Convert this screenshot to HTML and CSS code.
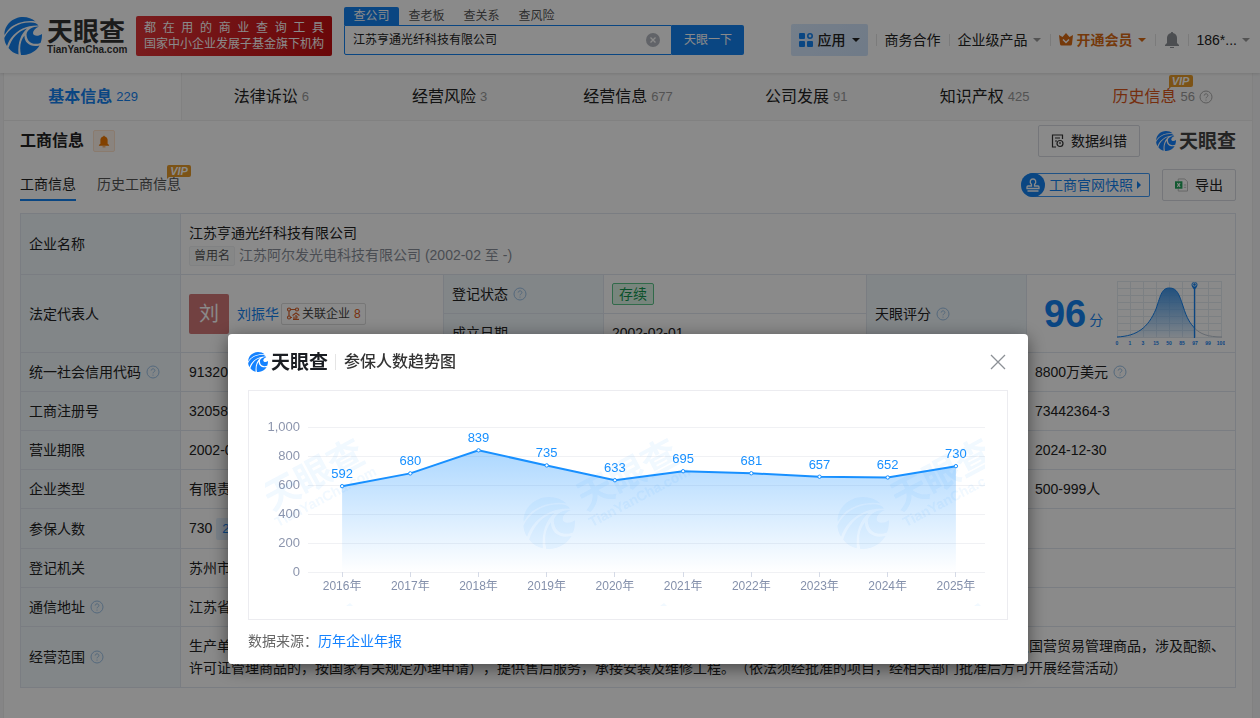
FILE: index.html
```html
<!DOCTYPE html>
<html lang="zh-CN">
<head>
  <meta charset="UTF-8">
  <meta name="viewport" content="width=device-width, initial-scale=1.0">
  <title>江苏亨通光纤科技有限公司 - 天眼查</title>
  <link rel="stylesheet" href="styles.css">
</head>
<body>
  <!-- 公用图标 -->
  <svg class="sprite" width="0" height="0" aria-hidden="true">
    <symbol id="i-logo" viewBox="0 0 38 38">
      <path fill="currentColor" d="M19 0c5 0 9 1.500 12.500 4.500C22 3 11 6 5 12c-2 2-3 4-4.500 6C0 8 9 0 19 0z"/>
      <path fill="currentColor" d="M.3 21C5 11 15 5 27 5.500c4 0 6 1 7.500 3C24 8 14 12 7 21c-2 3-3 5-4 8C1.500 27 .5 24 .3 21z"/>
      <path fill="currentColor" d="M4.500 31C8 21 14 14 23 11.500 17 17 13.500 25 14.500 37.500 10.500 36.500 7 34.500 4.500 31z"/>
      <path fill="currentColor" d="M17 38c-2-9 0-15 3.500-19.500C20 25 26 31 35.500 28.500 32 34.500 25 38.500 17 38z"/>
      <path fill="currentColor" d="M22.500 17.500C23 13 28 9.500 35 9.500c-3.500 1.500-6 4-6 6.500 0 3 5 4 9 1 0 3-.2 6-1.500 9-7.500 2.500-13.500-.5-14-8.500z"/>
    </symbol>
    <symbol id="i-help" viewBox="0 0 14 14">
      <circle cx="7" cy="7" r="6" fill="none" stroke="currentColor"/>
      <path d="M5.2 5.6c0-2.4 3.7-2.3 3.7-.1C8.900 6.900 7 6.900 7 8.300M7 9.600v1" fill="none" stroke="currentColor"/>
    </symbol>
    <symbol id="i-caret" viewBox="0 0 10 6">
      <path d="M1 1h8L5 5z" fill="currentColor"/>
    </symbol>
    <symbol id="i-bell" viewBox="0 0 16 18">
      <path d="M8 1c1 0 1 .6 1 1 3 .6 4 3 4 5v5l2 2v1H1v-1l2-2V7c0-2 1-4.400 4-5 0-.4 0-1 1-1zM6 16h4v1H6z" fill="currentColor"/>
    </symbol>
  </svg>

  <header class="header">
    <a class="brand" href="#">
      <svg class="brand-icon"><use href="#i-logo"/></svg>
      <span class="brand-text"><b>天眼查</b><small>TianYanCha.com</small></span>
    </a>
    <div class="slogan">
      <div class="slogan-top">都 在 用 的 商 业 查 询 工 具</div>
      <div>国家中小企业发展子基金旗下机构</div>
    </div>
    <form class="search">
      <div class="search-tabs">
        <a class="on" href="#">查公司</a><a href="#">查老板</a><a href="#">查关系</a><a href="#">查风险</a>
      </div>
      <div class="search-box">
        <input type="text" value="江苏亨通光纤科技有限公司" aria-label="搜索">
        <button class="clear" type="button" aria-label="清空">
          <svg viewBox="0 0 14 14"><circle cx="7" cy="7" r="7" fill="#b4b8c0"/><path d="M4.500 4.500l5 5m0-5l-5 5" stroke="#fff" stroke-width="1.300"/></svg>
        </button>
        <button class="go" type="button">天眼一下</button>
      </div>
    </form>
    <nav class="nav">
      <button class="apps" type="button">
        <svg class="apps-icon" viewBox="0 0 14 14" fill="#1482f0"><rect width="6" height="6" rx="1"/><rect y="8" width="6" height="6" rx="1"/><rect x="8" y="8" width="6" height="6" rx="1"/><circle cx="11" cy="3" r="2.200" fill="none" stroke="#1482f0" stroke-width="1.600"/></svg>
        应用
        <svg class="caret"><use href="#i-caret"/></svg>
      </button>
      <a href="#">商务合作</a>
      <a href="#">企业级产品<svg class="caret grey"><use href="#i-caret"/></svg></a>
      <a class="vip-link" href="#">
        <svg class="crown" viewBox="0 0 14 13"><path d="M0 2l3.500 2L7 0l3.500 4L14 2l-1 9q-.2 1.500-1.500 1.500h-9Q1.200 12.500 1 11z" fill="#d96a14"/><path d="M4 6.500l3 3 3-3" fill="none" stroke="#fff" stroke-width="1.500"/></svg>开通会员<svg class="caret"><use href="#i-caret"/></svg>
      </a>
      <a href="#" aria-label="消息"><svg class="bell"><use href="#i-bell"/></svg></a>
      <a href="#">186*...<svg class="caret grey"><use href="#i-caret"/></svg></a>
    </nav>
  </header>

  <main class="container">
    <nav class="tabs">
      <a class="on" href="#">基本信息<em>229</em></a>
      <a href="#">法律诉讼<em>6</em></a>
      <a href="#">经营风险<em>3</em></a>
      <a href="#">经营信息<em>677</em></a>
      <a href="#">公司发展<em>91</em></a>
      <a href="#">知识产权<em>425</em></a>
      <a class="history" href="#"><span class="with-vip">历史信息<i class="vip">VIP</i></span><em>56</em><svg class="help"><use href="#i-help"/></svg></a>
    </nav>

    <section class="section">
      <div class="title-row">
        <h2>工商信息</h2>
        <button class="remind" type="button" aria-label="提醒"><svg><use href="#i-bell"/></svg></button>
        <div class="right">
          <button class="btn btn-fix" type="button">
            <svg viewBox="0 0 13 14" fill="none" stroke="#333" stroke-width="1.200"><path d="M11.500 5V1H1.500v12h3.500M4 4h5M4 7h2"/><circle cx="9" cy="9.500" r="3"/><path d="M9 8v2"/></svg>
            数据纠错
          </button>
          <span class="mini-logo grey-logo"><svg><use href="#i-logo"/></svg><b>天眼查</b></span>
        </div>
      </div>
      <div class="sub-row">
        <a class="sub on" href="#">工商信息</a>
        <a class="sub" href="#"><span class="with-vip">历史工商信息<i class="vip">VIP</i></span></a>
        <div class="right">
          <button class="snapshot" type="button">
            <span class="stamp"><svg viewBox="0 0 14 14" fill="none" stroke="#fff" stroke-width="1.300"><path d="M5.500 8V6.500C3 4 4.500 1 7 1s4 3 1.500 5.500V8H12q1 0 1 1v1.500H1V9q0-1 1-1zM1.500 13h11"/></svg></span>
            工商官网快照
            <svg class="arrow" viewBox="0 0 4 8"><path d="M0 0l4 4-4 4z" fill="currentColor"/></svg>
          </button>
          <button class="btn btn-export" type="button">
            <svg viewBox="0 0 14 14"><path d="M3.500 3V.5h7l3 3v10h-10V11" fill="none" stroke="#bbb"/><path d="M9.500 7H12M9.500 9.500H12" stroke="#bbb"/><path d="M0 3h8v8H0z" fill="#22a55b"/><path d="M2.500 5l3 4m0-4l-3 4" stroke="#fff" stroke-width="1.200"/></svg>
            导出
          </button>
        </div>
      </div>

      <table class="info">
        <colgroup><col class="c-label"><col><col class="c-label"><col><col class="c-label"><col class="c-last"></colgroup>
        <tr>
          <th>企业名称</th>
          <td colspan="5"><div>江苏亨通光纤科技有限公司</div><div class="former"><span class="former-tag">曾用名</span>江苏阿尔发光电科技有限公司 (2002-02 至 -)</div></td>
        </tr>
        <tr>
          <th rowspan="2">法定代表人</th>
          <td rowspan="2">
            <div class="person">
              <span class="avatar">刘</span>
              <a class="name" href="#">刘振华</a>
              <a class="relate" href="#"><svg viewBox="0 0 13 13" fill="none" stroke="#d9622b" stroke-width="1.200"><circle cx="2.500" cy="2.500" r="1.500"/><circle cx="10.500" cy="2.500" r="1.500"/><circle cx="2.500" cy="10.500" r="1.500"/><path d="M4 2.500h5M2.500 4v5M4 10.500h1.500M6 8.500L9.500 6 13 8.500M9.500 8v4M7.500 9.500v2.500M6.500 12.300h6M9.500 10h2"/></svg>关联企业<em>8</em></a>
            </div>
          </td>
          <th>登记状态<svg class="help"><use href="#i-help"/></svg></th>
          <td class="status-cell"><span class="status">存续</span></td>
          <th rowspan="2">天眼评分<svg class="help"><use href="#i-help"/></svg></th>
          <td rowspan="2" class="score-cell">
            <div class="score">
              <b>96</b><span>分</span>
              <svg class="curve" viewBox="0 0 112 68">
                <defs><linearGradient id="bell-fill" x1="0" y1="0" x2="0" y2="1"><stop offset="0" stop-color="#3f95e8"/><stop offset="1" stop-color="#3f95e8" stop-opacity=".1"/></linearGradient></defs>
                <path d="M4.500 1.500v56M17.500 1.500v56M30.500 1.500v56M43.500 1.500v56M56.500 1.500v56M69.500 1.500v56M82.500 1.500v56M95.500 1.500v56M108.500 1.500v56M4 1.500h105M4 8.500h105M4 15.500h105M4 22.500h105M4 29.500h105M4 36.500h105M4 43.500h105M4 50.500h105M4 57.500h105" stroke="#e6ecf2" fill="none"/>
                <path d="M4 57C24 56 35 48 43 29 48 14 49 8 56.500 8S66 14 70 26C74 39 77 43 81.500 48V57.500H4z" fill="url(#bell-fill)"/>
                <path d="M81.500 48C87 54 95 57 109 57" stroke="#bcc6d2" fill="none"/>
                <path d="M4 57C24 56 35 48 43 29 48 14 49 8 56.500 8S66 14 70 26C74 39 77 43 81.500 48" stroke="#1482f0" fill="none"/>
                <path d="M81.500 5v53" stroke="#1482f0" stroke-width="1.300"/>
                <path d="M78.500 5a3 3 0 1 1 6 0q0 2-3 5-3-3-3-5z" fill="#1482f0"/><circle cx="81.500" cy="4.500" r="1.700" fill="#1482f0" stroke="#fff" stroke-width=".8"/>
                <g class="curve-axis"><text x="4" y="65">0</text><text x="17" y="65">1</text><text x="30" y="65">3</text><text x="43" y="65">15</text><text x="56" y="65">50</text><text x="69" y="65">85</text><text x="82" y="65">97</text><text x="95" y="65">99</text><text x="108" y="65">100</text></g>
              </svg>
            </div>
          </td>
        </tr>
        <tr>
          <th>成立日期</th>
          <td>2002-02-01</td>
        </tr>
        <tr>
          <th>统一社会信用代码<svg class="help"><use href="#i-help"/></svg></th>
          <td>91320</td>
          <th></th><td></td>
          <th></th>
          <td>8800万美元<svg class="help"><use href="#i-help"/></svg></td>
        </tr>
        <tr><th>工商注册号</th><td>32058</td><th></th><td></td><th></th><td>73442364-3</td></tr>
        <tr><th>营业期限</th><td>2002-0</td><th></th><td></td><th></th><td>2024-12-30</td></tr>
        <tr><th>企业类型</th><td>有限责</td><th></th><td></td><th></th><td>500-999人</td></tr>
        <tr class="insured"><th>参保人数</th><td colspan="5">730<span class="year-tag">2025</span></td></tr>
        <tr><th>登记机关</th><td colspan="5">苏州市</td></tr>
        <tr><th>通信地址<svg class="help"><use href="#i-help"/></svg></th><td colspan="5">江苏省</td></tr>
        <tr>
          <th>经营范围<svg class="help"><use href="#i-help"/></svg></th>
          <td colspan="5">生产单模光纤、多模光纤及特种光纤，销售本公司自产产品；从事光纤、光缆及相关产品的批发、进出口业务以及相关技术服务（不涉及国营贸易管理商品，涉及配额、许可证管理商品的，按国家有关规定办理申请），提供售后服务，承接安装及维修工程。（依法须经批准的项目，经相关部门批准后方可开展经营活动）</td>
        </tr>
      </table>
    </section>
  </main>

  <!-- 弹窗 -->
  <div class="mask">
    <div class="modal" role="dialog" aria-modal="true" aria-labelledby="modal-title">
      <div class="modal-head">
        <span class="mini-logo"><svg><use href="#i-logo"/></svg><b>天眼查</b></span>
        <h3 id="modal-title">参保人数趋势图</h3>
        <button class="close" type="button" aria-label="关闭"><svg viewBox="0 0 16 16"><path d="M1 1l14 14M15 1L1 15" stroke="#8c9096" stroke-width="1.300"/></svg></button>
      </div>
      <div class="chart-box">
        <svg class="chart" id="chart" viewBox="0 0 758 228">
          <defs>
            <linearGradient id="area-fill" x1="0" y1="0" x2="0" y2="1"><stop offset="0" stop-color="#1890ff" stop-opacity=".36"/><stop offset="1" stop-color="#1890ff" stop-opacity="0"/></linearGradient>
            <clipPath id="canvas"><rect x="16" y="8" width="720" height="207"/></clipPath>
            <g id="mark">
              <svg x="-26" y="-26" width="52" height="52"><use href="#i-logo"/></svg>
              <g transform="rotate(-28)"><text class="mark-cn" x="38" y="7">天眼查</text><text class="mark-en" x="36" y="24">TianYanCha.com</text></g>
            </g>
          </defs>
          <g id="plot"></g>
          <g class="marks" clip-path="url(#canvas)">
            <use href="#mark" x="-14" y="132"/><use href="#mark" x="300" y="132"/><use href="#mark" x="614" y="132"/>
            <path d="M97 215l4-3 3 3zM411 215l4-3 3 3zM725 215l4-3 3 3z"/>
          </g>
        </svg>
      </div>
      <p class="source">数据来源：<a href="#">历年企业年报</a></p>
    </div>
  </div>

  <script>
    var data = [
      [2016, 592], [2017, 680], [2018, 839], [2019, 735], [2020, 633],
      [2021, 695], [2022, 681], [2023, 657], [2024, 652], [2025, 730]
    ]
    var left = 59, right = 736, bottom = 181, height = 145, step = 68.2
    var html = ''
    var points = data.map(function (d, i) {
      return [left + step * (i + 0.5), bottom - d[1] / 1000 * height]
    })
    // 刻度线
    for (var v = 0; v <= 1000; v += 200) {
      var y = bottom - v / 1000 * height
      html += '<line class="grid" x1="' + left + '" x2="' + right + '" y1="' + (y + 0.5) + '" y2="' + (y + 0.5) + '"/>'
      html += '<text class="y-label" x="51" y="' + (y + 4) + '">' + v.toLocaleString('en-US') + '</text>'
    }
    // 面积 + 折线
    var line = points.join(' ')
    html += '<polygon fill="url(#area-fill)" points="' + points[0][0] + ',' + bottom + ' ' + line + ' ' + points[9][0] + ',' + bottom + '"/>'
    html += '<polyline class="line" points="' + line + '"/>'
    points.forEach(function (p, i) {
      var x = Math.floor(p[0]) + 0.5
      html += '<line class="tick" x1="' + x + '" x2="' + x + '" y1="181" y2="186"/>'
      html += '<circle class="dot" cx="' + p[0] + '" cy="' + p[1] + '" r="1.700"/>'
      html += '<text class="value" x="' + p[0] + '" y="' + (p[1] - 8) + '">' + data[i][1] + '</text>'
      html += '<text class="x-label" x="' + p[0] + '" y="199">' + data[i][0] + '年</text>'
    })
    document.getElementById('plot').innerHTML = html
  </script>
</body>
</html>
```

FILE: styles.css
```css
* {
  box-sizing: border-box;
}
body {
  margin: 0;
  min-height: 100vh;
  overflow: hidden;
  background: #f5f6f7;
  color: #222;
  font: 14px/22px "Liberation Sans", "Noto Sans CJK SC", sans-serif;
  text-spacing-trim: space-all;
}
a {
  color: inherit;
  text-decoration: none;
}
button,
input {
  padding: 0;
  border: 0;
  background: none;
  color: inherit;
  font: inherit;
}
em,
i {
  font-style: normal;
}
.sprite {
  position: absolute;
}

/* header */
.header {
  position: relative;
  display: flex;
  align-items: center;
  height: 73px;
  padding: 0 1px 2px 4px;
  background: #fff;
  box-shadow: 0 1px 3px rgba(0, 0, 0, .12);
}
.brand {
  display: flex;
  align-items: center;
  gap: 5px;
}
.brand-icon {
  width: 38px;
  height: 38px;
  color: #1482f0;
}
.brand-text {
  display: flex;
  flex-direction: column;
  width: 80px;
  color: #333;
  white-space: nowrap;
}
.brand-text b {
  font-size: 26px;
  line-height: 28px;
}
.brand-text small {
  font-size: 10px;
  line-height: 8px;
  font-weight: bold;
}
.slogan {
  width: 196px;
  height: 40px;
  margin-left: 9px;
  padding: 4px 8px;
  border-radius: 2px;
  background: linear-gradient(100deg, #e03538, #c40d10);
  color: #fff;
  font-size: 12px;
  line-height: 16px;
}
.slogan-top {
  text-align-last: justify;
}
.search {
  width: 400px;
  height: 57px;
  margin: 0 0 4px 12px;
  padding-top: 2px;
}
.search-tabs {
  display: flex;
  height: 18px;
  font-size: 12px;
  line-height: 18px;
  color: #555;
}
.search-tabs a {
  width: 55px;
  text-align: center;
}
.search-tabs .on {
  border-radius: 2px 2px 0 0;
  background: #1482f0;
  color: #fff;
}
.search-box {
  position: relative;
  display: flex;
  height: 30px;
}
.search-box input {
  flex: 1;
  min-width: 0;
  padding: 0 36px 0 8px;
  border: 1px solid #1482f0;
  border-radius: 0 0 0 2px;
  background: #fff;
  font-size: 12px;
}
.clear {
  position: absolute;
  top: 8px;
  right: 84px;
  width: 14px;
  height: 14px;
}
.clear svg {
  display: block;
}
.go {
  width: 72px;
  border-radius: 0 2px 2px 0;
  background: #1482f0;
  color: #fff;
  font-size: 12px;
}
.nav {
  display: flex;
  align-items: center;
  margin-left: auto;
  padding-top: 8px;
}
.nav a {
  display: flex;
  align-items: center;
  position: relative;
  height: 32px;
  gap: 4px;
  padding: 0 8px 0 9px;
  white-space: nowrap;
}
.nav a::before {
  content: "";
  width: 1px;
  height: 12px;
  position: absolute;
  left: 0;
  background: #e3e3e3;
}
.apps {
  display: flex;
  align-items: center;
  gap: 5px;
  height: 32px;
  margin-right: 8px;
  padding: 0 7px 0 8px;
  border-radius: 2px;
  background: linear-gradient(135deg, #d8eaff, #cfe3fb);
  font-weight: 500;
}
.apps-icon {
  width: 14px;
  height: 14px;
}
.caret {
  width: 10px;
  height: 6px;
}
.grey {
  color: #999;
}
.crown {
  width: 14px;
  height: 13px;
}
.nav .vip-link {
  color: #d96a14;
  font-weight: bold;
}
.bell {
  width: 16px;
  height: 18px;
  color: #8c9096;
}

/* 主体 */
.container {
  margin: 0 8px 0 4px;
  background: #fff;
  box-shadow: 0 0 0 1px #eee;
}
.tabs {
  display: flex;
  height: 48px;
  background: #fafafa;
  border-bottom: 1px solid #eee;
}
.tabs a {
  flex: 1 1 0;
  display: flex;
  align-items: center;
  justify-content: center;
  gap: 4px;
  font-size: 16px;
}
.tabs em {
  color: #999;
  font-size: 13px;
}
.tabs .on {
  background: #fff;
  box-shadow: inset -1px 0 #eee;
  color: #1482f0;
  font-weight: bold;
}
.tabs .on em {
  color: #1482f0;
  font-weight: normal;
}
.tabs .history {
  color: #d9561b;
}
.tabs .help {
  margin-left: 0;
  color: #aaa;
}
.with-vip {
  position: relative;
}
.vip {
  position: absolute;
  right: -16px;
  top: -11px;
  width: 24px;
  height: 12px;
  border-radius: 2px 2px 2px 0;
  background: #e69a2a;
  color: #fff;
  font: italic bold 11px/12px "Liberation Sans", sans-serif;
  text-align: center;
}
.vip::after {
  content: "";
  position: absolute;
  left: 0;
  top: 11px;
  border-top: 3px solid #e69a2a;
  border-right: 3px solid transparent;
}
.help {
  width: 14px;
  height: 14px;
  margin-left: 5px;
  color: #9dc3e6;
  vertical-align: -2px;
}
.section {
  padding: 4px 16px 30px;
}
.title-row,
.sub-row {
  display: flex;
  align-items: center;
  height: 32px;
  margin-bottom: 12px;
}
.title-row h2 {
  margin: 0;
  font-size: 16px;
}
.remind {
  width: 22px;
  height: 22px;
  margin-left: 9px;
  border: 1px solid #ffe3cc;
  border-radius: 2px;
  background: #fff4ea;
  color: #f07800;
  line-height: 0;
}
.remind svg {
  width: 12px;
  height: 13px;
}
.right {
  display: flex;
  align-items: center;
  margin-left: auto;
}
.btn {
  display: flex;
  align-items: center;
  justify-content: center;
  gap: 7px;
  height: 32px;
  padding: 0 12px;
  border: 1px solid #d8dbe2;
  border-radius: 2px;
}
.btn svg {
  width: 13px;
  height: 14px;
}
.btn-fix {
  margin-right: 16px;
}
.mini-logo {
  display: flex;
  align-items: center;
  gap: 3px;
  height: 20px;
  color: #1482ff;
}
.mini-logo svg {
  width: 20px;
  height: 20px;
}
.mini-logo b {
  padding-top: 2px;
  color: #1a1d22;
  font-size: 19px;
  line-height: 20px;
}
.grey-logo b {
  color: #444;
}
.sub {
  height: 32px;
  margin-right: 21px;
  line-height: 30px;
  color: #555;
}
.sub.on {
  border-bottom: 2px solid #1482f0;
  color: #222;
}
.sub .vip {
  right: -10px;
}
.snapshot {
  display: flex;
  align-items: center;
  gap: 4px;
  height: 24px;
  margin-right: 12px;
  padding-right: 8px;
  border: 1px solid #3c98f5;
  border-left: 0;
  border-radius: 12px 2px 2px 12px;
  color: #1482f0;
}
.stamp {
  display: grid;
  place-items: center;
  width: 24px;
  height: 24px;
  border-radius: 50%;
  background: #1482f0;
}
.stamp svg {
  width: 14px;
  height: 14px;
}
.arrow {
  width: 4px;
  height: 8px;
}

/* 工商信息表 */
.info {
  width: 100%;
  border-collapse: collapse;
  table-layout: fixed;
}
.c-label {
  width: 160px;
}
.c-last {
  width: 209px;
}
.info th,
.info td {
  height: 39px;
  padding: 8px;
  border: 1px solid #e2e8f0;
  text-align: left;
  font-weight: normal;
}
.info th {
  background: #f0f7fc;
}
.former {
  color: #8a8f99;
}
.former-tag {
  display: inline-block;
  margin-right: 4px;
  padding: 0 4px;
  border: 1px solid #eef1f3;
  border-radius: 2px;
  background: #f8fafa;
  color: #555;
  font-size: 12px;
  line-height: 18px;
}
.person {
  display: flex;
  align-items: center;
}
.avatar {
  width: 40px;
  height: 40px;
  margin-right: 8px;
  border-radius: 2px;
  background: #d27878;
  color: #fff;
  font-size: 20px;
  line-height: 40px;
  text-align: center;
}
.name {
  margin-right: 2px;
  color: #1482f0;
}
.relate {
  display: flex;
  align-items: center;
  gap: 2px;
  height: 22px;
  padding: 0 4px;
  border: 1px solid #ddd;
  border-radius: 2px;
  color: #444;
  font-size: 12px;
}
.relate svg {
  width: 14px;
  height: 13px;
}
.relate em {
  margin-left: 2px;
  color: #e05a20;
}
.info .status-cell {
  padding: 0 8px;
}
.status {
  display: inline-block;
  height: 22px;
  padding: 0 6px;
  border: 1px solid #5cc48a;
  border-radius: 2px;
  background: #def6e8;
  color: #149650;
  line-height: 20px;
}
.info .score-cell {
  padding: 0 8px 0 17px;
}
.score {
  display: flex;
  align-items: center;
  color: #1482f0;
}
.score b {
  margin-right: 3px;
  font-size: 38px;
}
.score span {
  padding-top: 13px;
}
.curve {
  width: 112px;
  height: 68px;
  margin-left: 10px;
  flex: none;
}
.curve-axis {
  fill: #1482f0;
  font-size: 5px;
  font-weight: bold;
  text-anchor: middle;
}
.info .insured td {
  height: 40px;
}
.year-tag {
  display: inline-block;
  margin-left: 4px;
  padding: 0 6px;
  border-radius: 2px;
  background: #e3f1ff;
  color: #1482f0;
  font-size: 13px;
}

/* 弹窗 */
.mask {
  position: fixed;
  inset: 0;
  display: flex;
  justify-content: center;
  align-items: flex-start;
  padding: 334px 4px 0 0;
  background: rgba(0, 0, 0, .46);
}
.modal {
  width: 800px;
  padding: 16px 20px 12px;
  border-radius: 4px;
  background: #fff;
  box-shadow: 0 4px 18px rgba(0, 0, 0, .5);
}
.modal-head {
  display: flex;
  align-items: center;
  height: 24px;
  margin-bottom: 16px;
}
.modal h3 {
  margin: 0 auto 0 7px;
  padding-left: 8px;
  border-left: 1px solid #e5e5e5;
  color: #333;
  font-size: 16px;
  line-height: 16px;
  font-weight: 500;
}
.close {
  width: 20px;
  height: 16px;
  line-height: 0;
}
.close svg {
  width: 16px;
  height: 16px;
}
.chart-box {
  border: 1px solid #ececf0;
}
.chart {
  display: block;
  width: 100%;
}
.grid {
  stroke: #f0f1f4;
}
.tick {
  stroke: #d5dae6;
}
.line {
  fill: none;
  stroke: #1890ff;
  stroke-width: 2;
}
.dot {
  fill: #fff;
  stroke: #1890ff;
}
.y-label {
  fill: #8c95ad;
  font-size: 13px;
  text-anchor: end;
}
.x-label {
  fill: #8490ab;
  font-size: 12px;
  text-anchor: middle;
}
.value {
  fill: #1890ff;
  font-size: 13px;
  text-anchor: middle;
}
.marks {
  color: #1890ff;
  fill: #1890ff;
  opacity: .06;
}
.mark-cn {
  font-size: 36px;
  font-weight: bold;
}
.mark-en {
  font-size: 14px;
  font-weight: bold;
}
.source {
  margin: 10px 0 0;
  color: #666;
}
.source a {
  color: #1482ff;
}
```
